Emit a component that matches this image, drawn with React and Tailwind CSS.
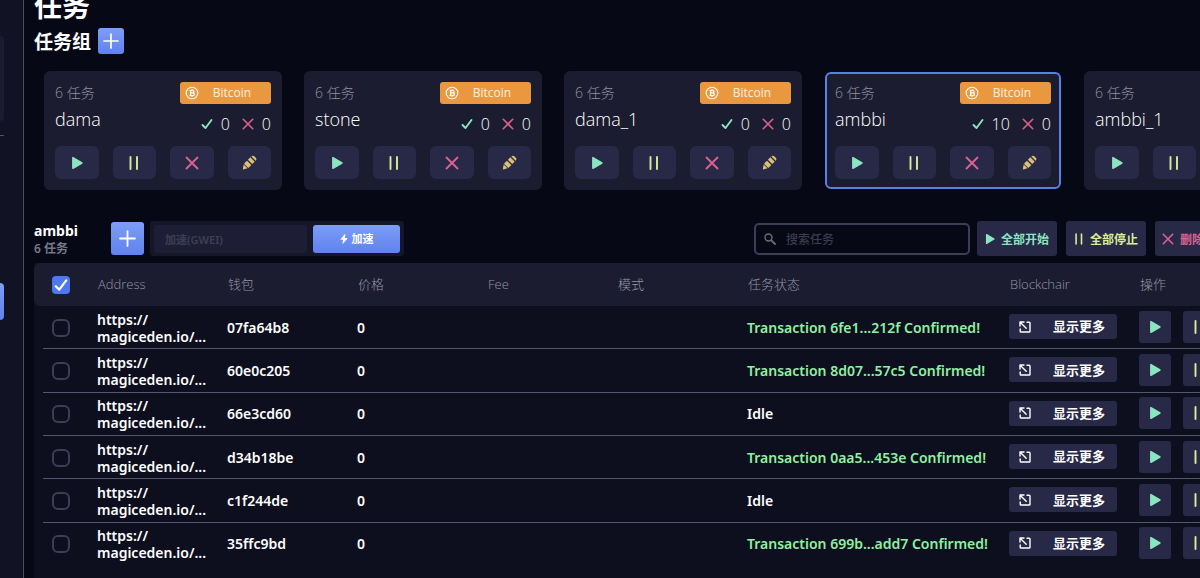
const FONT = "font-['Open_Sans','Noto_Sans_CJK_SC',sans-serif]";
const FONT_BOLD = "font-['Noto_Sans','Noto_Sans_CJK_SC',sans-serif]";

function Play({ className }) {
  return (
    <svg viewBox="0 0 12 14" className={className} aria-hidden="true">
      <path d="M1.900 1.700v10.600l9-5.300z" fill="#8be5c0" stroke="#8be5c0" strokeWidth="1.600" strokeLinejoin="round" />
    </svg>
  );
}

function Pause({ className }) {
  return (
    <svg viewBox="0 0 12 14" className={className} aria-hidden="true">
      <path d="M2.500 1v12M9 1v12" stroke="#dcec95" strokeWidth="1.900" strokeLinecap="round" />
    </svg>
  );
}

function Cross({ className }) {
  return (
    <svg viewBox="0 0 14 14" className={className} aria-hidden="true">
      <path d="M1.500 1.500l11 11M12.500 1.500l-11 11" stroke="#db6290" strokeWidth="1.900" strokeLinecap="round" />
    </svg>
  );
}

function Check({ className, color, width }) {
  return (
    <svg viewBox="0 0 12 12" className={className} aria-hidden="true">
      <path d="M1.500 7l3 3L10.500 2" fill="none" stroke={color} strokeWidth={width} strokeLinecap="round" strokeLinejoin="round" />
    </svg>
  );
}

function Plus({ className }) {
  return (
    <svg viewBox="0 0 16 16" className={className} aria-hidden="true">
      <path d="M8 1v14M1 8h14" stroke="#fff" strokeWidth="1.700" strokeLinecap="round" />
    </svg>
  );
}

function Pencil({ className }) {
  return (
    <svg viewBox="0 0 16 16" className={className} aria-hidden="true" fill="#dcbf74">
      <path d="M1.800 10.100 5.900 14.200 2.200 15.300Q.7 15.600 1 14.100z" />
      <path d="M2.500 8.900 5.300 6.100 9.900 10.700 7.100 13.500Q6.600 13.800 6.200 13.400L2.600 9.800Q2.200 9.300 2.500 8.900z" />
      <path d="M6.300 5.100 8.900 2.500 13.500 7.100 10.900 9.700z" />
      <path d="M10 1.500Q11.500.2 13.100 1.300 14.700 2.700 15.200 3.700 15.700 5 14.500 6z" />
    </svg>
  );
}

function Coin({ className }) {
  return (
    <svg viewBox="0 0 14 14" className={className} aria-hidden="true" fill="none" stroke="#fff">
      <circle cx="7" cy="7" r="5.800" strokeWidth="1.100" />
      <path d="M4.600 4.500h3.200a1.200 1.200 0 0 1 0 2.400H5.600M5.600 6.900h2.500a1.300 1.300 0 0 1 0 2.600H4.600M5.600 4.500v5M6.300 3.400v1.100M7.700 3.400v1.100M6.300 9.500v1.100M7.700 9.500v1.100" strokeWidth="1.200" />
    </svg>
  );
}

function Expand({ className }) {
  return (
    <svg viewBox="0 0 12 12" className={className} aria-hidden="true" fill="none" stroke="#fff" strokeWidth="1.400" strokeLinecap="round" strokeLinejoin="round">
      <path d="M1 5V1h4M1.200 1.200 7.200 7.200M8 1.200h2.200a.8.800 0 0 1 .8.800v8.200a.8.800 0 0 1-.8.800H2a.8.800 0 0 1-.8-.8V8" />
    </svg>
  );
}

function Magnifier({ className }) {
  return (
    <svg viewBox="0 0 12 12" className={className} aria-hidden="true" fill="none" stroke="#6b6c7d" strokeLinecap="round">
      <circle cx="4.500" cy="4.500" r="3.500" strokeWidth="1.400" />
      <path d="M7.300 7.300l3.700 3.700" strokeWidth="1.800" />
    </svg>
  );
}

function Bolt({ className }) {
  return (
    <svg viewBox="0 0 8 10" className={className} aria-hidden="true" fill="#fff">
      <path d="M4.600.3.600 5.200q-.3.500.3.600h2.200l-.6 3.700q.2.500.6.100L7.400 4.700q.2-.5-.3-.6H4.900L5.400.6Q5.200 0 4.600.3z" />
    </svg>
  );
}

const groups = [
  { name: "dama", done: 0, failed: 0 },
  { name: "stone", done: 0, failed: 0 },
  { name: "dama_1", done: 0, failed: 0 },
  { name: "ambbi", done: 10, failed: 0, selected: true },
  { name: "ambbi_1", done: 0, failed: 0 },
];

const tasks = [
  { wallet: "07fa64b8", status: "Transaction 6fe1...212f Confirmed!" },
  { wallet: "60e0c205", status: "Transaction 8d07...57c5 Confirmed!" },
  { wallet: "66e3cd60", status: "Idle" },
  { wallet: "d34b18be", status: "Transaction 0aa5...453e Confirmed!" },
  { wallet: "c1f244de", status: "Idle" },
  { wallet: "35ffc9bd", status: "Transaction 699b...add7 Confirmed!" },
];

function CardButton({ label, children }) {
  return (
    <button type="button" aria-label={label} className="flex h-[33px] items-center justify-center rounded-md bg-[#282947]">
      {children}
    </button>
  );
}

function GroupCard({ group }) {
  const frame = group.selected ? "m-px border-2 border-[#5b7fe8] p-2" : "p-[11px]";
  return (
    <article className={`box-content flex w-[216px] shrink-0 flex-col justify-between rounded-md bg-[#1b1c30] ${frame}`}>
      <div className="flex justify-between">
        <div className="flex flex-col pt-px font-light">
          <span className="text-sm leading-5 text-[#8f90a2]">6 任务</span>
          <h3 className="text-lg leading-8 text-white">{group.name}</h3>
        </div>
        <div className="flex flex-col items-end gap-2">
          <span className="flex h-[22px] w-[91px] items-center rounded-[3px] bg-[#e9983f] pl-[5px] text-xs text-[#fdf1e2]">
            <Coin className="size-3.5" />
            <span className="flex-1 pr-1.5 text-center">Bitcoin</span>
          </span>
          <div className="flex items-center text-base leading-6 font-light text-white">
            <Check className="mr-2 size-3" color="#8be5c0" width="1.900" />
            <span>{group.done}</span>
            <Cross className="mr-2 ml-3 size-3" />
            <span>{group.failed}</span>
          </div>
        </div>
      </div>
      <div className="grid grid-cols-4 gap-3.5">
        <CardButton label="开始"><Play className="h-3.5 w-3" /></CardButton>
        <CardButton label="暂停"><Pause className="h-3.5 w-3" /></CardButton>
        <CardButton label="删除"><Cross className="size-3.5" /></CardButton>
        <CardButton label="编辑"><Pencil className="size-[15px]" /></CardButton>
      </div>
    </article>
  );
}

const box = "flex size-[18px] shrink-0 appearance-none rounded-md border-2 border-[#3d3e56] bg-transparent";
const square = "flex size-8 shrink-0 items-center justify-center rounded-[3px] bg-[#282947]";

function TaskRow({ task, last }) {
  const line = last ? "" : "bg-[linear-gradient(#55566e,#55566e)] bg-[length:100%_1px] bg-[position:9px_100%] bg-no-repeat";
  const done = task.status !== "Idle";
  return (
    <tr className={`h-[43px] ${line}`}>
      <td className="pl-[18px]">
        <input type="checkbox" aria-label={task.wallet} className={box} />
      </td>
      <td className="text-sm leading-[17px]">https://<br />magiceden.io/...</td>
      <td>{task.wallet}</td>
      <td>0</td>
      <td></td>
      <td></td>
      <td className={done ? "text-[#90f0a2]" : ""}>{task.status}</td>
      <td className="pb-0.5">
        <button type="button" className="flex h-[25px] w-[108px] items-center justify-between rounded-[3px] bg-[#282947] pr-3 pl-2.5 text-[13px] font-bold">
          <Expand className="size-3" />
          显示更多
        </button>
      </td>
      <td className="pb-0.5">
        <div className="flex gap-3">
          <button type="button" aria-label="开始" className={square}><Play className="h-3.5 w-3" /></button>
          <button type="button" aria-label="暂停" className={square}><Pause className="h-3.5 w-3" /></button>
        </div>
      </td>
    </tr>
  );
}

const blue = "bg-linear-to-b from-[#7d9df6] to-[#5f82ee]";
const bulk = "flex h-[35px] w-20 shrink-0 items-center justify-center gap-1.5 rounded-[3px] bg-[#282947] text-xs font-bold whitespace-nowrap *:last:pt-[3px]";

export default function App() {
  return (
    <div className={`flex h-screen overflow-hidden bg-[#070816] text-white ${FONT}`}>
      <aside className="flex w-6 shrink-0 flex-col items-start border-r border-[#4b4c63] bg-[#111224] pt-9">
        <div className="h-[85px] w-1 rounded-r-sm bg-[#1b1c30]"></div>
        <hr className="mt-3.5 w-1 border-[#50516a]" />
        <a href="#tasks" aria-label="任务" className={`mt-[147px] h-[37px] w-1 rounded-r-sm ${blue}`}></a>
      </aside>

      <main className="min-w-0 flex-1 overflow-hidden pl-2.5">
        <h1 className={`-mt-[14px] text-[28px] leading-10 font-bold ${FONT_BOLD}`}>任务</h1>
        <div className="mt-0.5 flex items-center gap-[7px]">
          <h2 className={`pt-0.5 text-[19px] leading-6 font-bold ${FONT_BOLD}`}>任务组</h2>
          <button type="button" aria-label="新建任务组" className={`flex size-[26px] items-center justify-center rounded-[3px] ${blue}`}>
            <Plus className="size-4" />
          </button>
        </div>

        <section className="mt-[17px] flex h-[119px] gap-[22px] overflow-hidden pl-2.5">
          {groups.map((g) => <GroupCard key={g.name} group={g} />)}
        </section>

        <section className={`mt-[31px] flex h-[35px] items-center ${FONT_BOLD}`}>
          <div className="w-[77px] shrink-0 pt-0.5">
            <h2 className="text-sm leading-[18px] font-bold">ambbi</h2>
            <p className="text-xs leading-[18px] font-semibold text-[#77788a]">6 任务</p>
          </div>
          <button type="button" aria-label="新建任务" className={`flex size-[33px] shrink-0 items-center justify-center rounded-[3px] ${blue}`}>
            <Plus className="size-[17px]" />
          </button>
          <form className="ml-1.5 flex h-[35px] shrink-0 items-center gap-1.5 rounded-[3px] bg-[#151627] px-1">
            <input aria-label="加速(GWEI)" placeholder="加速(GWEI)" className="h-7 w-[153px] rounded-[3px] bg-[#1d1e36] px-[11px] pt-0.5 text-[11px] font-semibold outline-none placeholder:text-[#3d3e54]" />
            <button type="button" className={`flex h-7 w-[87px] items-center justify-center gap-1 rounded-[3px] text-[11px] font-bold ${blue}`}>
              <Bolt className="h-2.5 w-2" />
              <span className="pt-0.5">加速</span>
            </button>
          </form>
          <label className="ml-[350px] flex h-8 w-[216px] shrink-0 items-center gap-2.5 rounded-[5px] border-2 border-[#3d3e56] px-2">
            <Magnifier className="size-3" />
            <input aria-label="搜索任务" placeholder="搜索任务" className="min-w-0 flex-1 bg-transparent pt-0.5 text-xs font-medium outline-none placeholder:text-[#3a3b4b]" />
          </label>
          <div className="ml-[7px] flex shrink-0 gap-[9px]">
            <button type="button" className={`${bulk} text-[#8be5c0]`}><Play className="h-3 w-2.5" /><span>全部开始</span></button>
            <button type="button" className={`${bulk} text-[#dcec95]`}><Pause className="h-3 w-2.5" /><span>全部停止</span></button>
            <button type="button" className={`${bulk} text-[#db6290]`}><Cross className="size-3" /><span>删除全部</span></button>
          </div>
        </section>

        <section className="mt-[7px] overflow-hidden bg-[#0d0e1e] pb-3">
          <table className="h-[303px] w-[1232px] table-fixed text-left">
            <colgroup>
              <col className="w-[63px]" />
              <col className="w-[130px]" />
              <col className="w-[130px]" />
              <col className="w-[130px]" />
              <col className="w-[130px]" />
              <col className="w-[130px]" />
              <col className="w-[262px]" />
              <col className="w-[130px]" />
              <col />
            </colgroup>
            <thead>
              <tr className="h-[43px] bg-[#1b1c30] text-[13px] text-[#9596a5] *:pl-px *:font-light">
                <th className="rounded-l-md">
                  <label className="ml-[17px] grid size-[18px] place-items-center rounded-[4px] bg-[#4f78ee] *:col-start-1 *:row-start-1">
                    <input type="checkbox" defaultChecked aria-label="全选" className="size-full appearance-none" />
                    <Check className="pointer-events-none size-3.5" color="#fff" width="1.900" />
                  </label>
                </th>
                <th>Address</th>
                <th>钱包</th>
                <th>价格</th>
                <th>Fee</th>
                <th>模式</th>
                <th>任务状态</th>
                <th>Blockchair</th>
                <th>操作</th>
              </tr>
            </thead>
            <tbody className={`text-sm font-semibold ${FONT_BOLD}`}>
              {tasks.map((t, i) => <TaskRow key={t.wallet} task={t} last={i === tasks.length - 1} />)}
            </tbody>
          </table>
        </section>
      </main>
    </div>
  );
}
